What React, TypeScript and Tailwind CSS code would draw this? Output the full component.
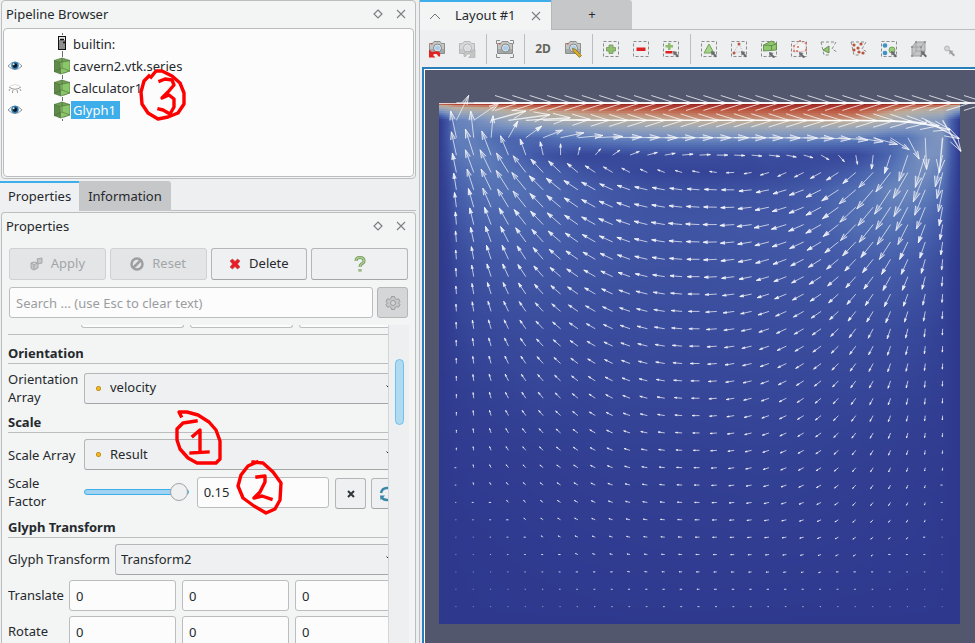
import React from "react";

/* ---------- velocity field ---------- */

type Sample = [number, number, number]; // column, dx, dy

// Sampled arrows of the cavity flow, three units to one screen pixel.
const FIELD: { row: number; samples: Sample[] }[] = [
  { row: 0, samples: [[0, 187, 0], [30, 187, 0]] },
  {
    row: 1,
    samples: [
      [0, 0, 0], [1, 37, -75], [2, 76, -52], [3, 104, -28], [4, 124, -17], [5, 133, -8], [6, 141, -3], [7, 146, 0],
      [9, 156, 0], [15, 166, 0], [23, 168, 1], [24, 167, 3], [25, 160, 8], [26, 146, 16], [27, 127, 28],
      [28, 102, 55], [29, 55, 93], [30, 0, 0],
    ],
  },
  {
    row: 2,
    samples: [
      [0, 0, 0], [1, -17, -80], [2, -9, -80], [3, 6, -66], [4, 28, -50], [5, 48, -35], [6, 58, -23], [7, 70, -15],
      [8, 75, -7], [9, 82, -4], [10, 87, -2], [12, 90, 0], [16, 95, 0], [20, 93, 1], [22, 88, 4], [23, 88, 7],
      [24, 82, 12], [25, 73, 20], [26, 56, 36], [27, 34, 64], [28, 4, 95], [29, -10, 105], [30, 0, 0],
    ],
  },
  {
    row: 3,
    samples: [
      [0, 0, 0], [1, -15, -70], [2, -25, -78], [3, -28, -72], [4, -24, -58], [5, -17, -48], [6, -9, -40], [7, 0, -34],
      [8, 6, -24], [9, 16, -19], [10, 22, -15], [11, 28, -11], [12, 30, -8], [14, 33, -3], [16, 33, 0], [18, 31, 3],
      [19, 33, 4], [20, 30, 6], [21, 28, 8], [22, 24, 14], [23, 18, 20], [24, 5, 28], [25, -5, 42], [26, -18, 55],
      [27, -27, 78], [28, -30, 97], [29, -22, 95], [30, 0, 0],
    ],
  },
  {
    row: 4,
    samples: [
      [0, 0, 0], [1, -12, -58], [2, -25, -68], [3, -33, -68], [4, -36, -58], [5, -38, -50], [6, -37, -40],
      [7, -36, -34], [8, -32, -27], [9, -30, -20], [10, -28, -17], [11, -25, -13], [12, -22, -10], [14, -21, -6],
      [16, -22, -3], [17, -24, 1], [18, -23, 4], [19, -26, 8], [20, -26, 12], [21, -28, 14], [22, -32, 18],
      [23, -36, 23], [24, -39, 33], [25, -43, 45], [26, -44, 58], [27, -44, 77], [28, -36, 88], [29, -17, 78],
      [30, 0, 0],
    ],
  },
  {
    row: 5,
    samples: [
      [0, 0, 0], [1, -8, -50], [2, -20, -62], [3, -30, -62], [4, -37, -58], [5, -42, -52], [6, -42, -42],
      [7, -43, -35], [8, -42, -28], [9, -41, -23], [10, -39, -18], [12, -38, -9], [15, -37, -3], [17, -38, 0],
      [18, -38, 4], [19, -39, 8], [20, -40, 12], [21, -43, 16], [22, -45, 22], [23, -50, 33], [24, -50, 42],
      [25, -49, 57], [26, -48, 73], [27, -42, 80], [28, -32, 76], [29, -13, 66], [30, 0, 0],
    ],
  },
  {
    row: 7,
    samples: [
      [0, 0, 0], [1, -3, -38], [2, -12, -50], [3, -20, -52], [4, -28, -50], [5, -35, -45], [6, -38, -40],
      [7, -40, -35], [8, -40, -28], [9, -41, -23], [10, -42, -18], [12, -40, -10], [14, -41, -4], [16, -42, 0],
      [18, -44, 6], [20, -45, 14], [22, -46, 26], [23, -46, 36], [24, -46, 48], [25, -42, 53], [26, -40, 60],
      [27, -30, 60], [28, -21, 55], [29, -8, 45], [30, 0, 0],
    ],
  },
  {
    row: 9,
    samples: [
      [0, 0, 0], [1, -2, -28], [2, -7, -38], [3, -14, -42], [4, -19, -42], [5, -26, -40], [6, -30, -35],
      [7, -34, -30], [8, -36, -25], [10, -38, -18], [12, -38, -9], [15, -38, 0], [16, -40, 2], [18, -40, 8],
      [20, -40, 15], [22, -38, 24], [24, -33, 35], [25, -32, 40], [26, -27, 45], [27, -20, 45], [28, -12, 42],
      [29, -3, 32], [30, 0, 0],
    ],
  },
  {
    row: 13,
    samples: [
      [0, 0, 0], [1, -1, -20], [2, -4, -26], [3, -8, -27], [4, -13, -27], [5, -18, -26], [6, -22, -23], [8, -26, -18],
      [10, -28, -13], [12, -31, -8], [15, -32, 0], [18, -31, 7], [20, -30, 14], [22, -27, 19], [24, -20, 27],
      [26, -10, 30], [27, -7, 28], [28, -3, 25], [29, -1, 19], [30, 0, 0],
    ],
  },
  {
    row: 17,
    samples: [
      [0, 0, 0], [1, 0, -12], [2, -2, -17], [3, -5, -18], [4, -9, -18], [6, -15, -18], [8, -17, -14], [10, -21, -11],
      [12, -23, -6], [15, -24, 0], [18, -24, 6], [20, -22, 11], [22, -18, 15], [24, -14, 19], [26, -7, 20],
      [28, -2, 18], [29, -1, 15], [30, 0, 0],
    ],
  },
  {
    row: 21,
    samples: [
      [0, 0, 0], [1, 0, -6], [2, -2, -9], [4, -7, -9], [6, -10, -8], [8, -13, -8], [10, -16, -6], [12, -17, -3],
      [15, -17, 0], [18, -18, 4], [20, -17, 7], [22, -15, 9], [24, -10, 12], [26, -6, 13], [28, -2, 10], [29, -1, 8],
      [30, 0, 0],
    ],
  },
  {
    row: 25,
    samples: [
      [0, 0, 0], [1, 0, -2], [4, -4, -4], [8, -9, -4], [15, -13, 0], [20, -13, 2], [24, -9, 6], [28, -3, 6],
      [29, 0, 3], [30, 0, 0],
    ],
  },
  { row: 29, samples: [[0, 0, 0], [1, -1, 0], [15, -6, 0], [28, -2, 1], [30, 0, 0]] },
  { row: 30, samples: [[0, 0, 0], [30, 0, 0]] },
];

const CELLS = 30;
const PLOT = { x: 14, y: 33, size: 521 };
const STEP = PLOT.size / CELLS;

function alongRow(samples: Sample[], col: number): [number, number] {
  for (let k = 1; k < samples.length; k++) {
    const [c0, x0, y0] = samples[k - 1];
    const [c1, x1, y1] = samples[k];
    if (col <= c1) {
      const t = (col - c0) / (c1 - c0);
      return [x0 + (x1 - x0) * t, y0 + (y1 - y0) * t];
    }
  }
  return [0, 0];
}

function velocity(col: number, row: number): [number, number] {
  for (let k = 1; k < FIELD.length; k++) {
    if (row <= FIELD[k].row) {
      const a = FIELD[k - 1];
      const b = FIELD[k];
      const t = (row - a.row) / (b.row - a.row);
      const u = alongRow(a.samples, col);
      const v = alongRow(b.samples, col);
      return [u[0] + (v[0] - u[0]) * t, u[1] + (v[1] - u[1]) * t];
    }
  }
  return [0, 0];
}

const COLOR_STOPS: [number, number[]][] = [
  [0, [46, 57, 142]],
  [15, [49, 62, 146]],
  [32, [58, 76, 157]],
  [50, [69, 93, 170]],
  [75, [90, 120, 184]],
  [100, [122, 146, 192]],
  [135, [158, 168, 182]],
  [158, [184, 174, 160]],
  [166, [194, 160, 138]],
  [173, [194, 120, 95]],
  [179, [188, 84, 62]],
  [187, [150, 28, 32]],
];

function colorOf(speed: number): string {
  for (let k = 1; k < COLOR_STOPS.length; k++) {
    const [s0, a] = COLOR_STOPS[k - 1];
    const [s1, b] = COLOR_STOPS[k];
    if (speed <= s1) {
      const t = (speed - s0) / (s1 - s0);
      return `rgb(${a.map((c, i) => Math.round(c + (b[i] - c) * t)).join(",")})`;
    }
  }
  return "rgb(150,28,32)";
}

const NODES = Array.from({ length: CELLS + 1 }, (_, j) =>
  Array.from({ length: CELLS + 1 }, (_, i) => {
    const [x, y] = velocity(i, j);
    return Math.hypot(x, y);
  }),
);

const BAND = 2;
const BANDS = Array.from({ length: Math.ceil(PLOT.size / BAND) }, (_, n) => {
  const top = n * BAND;
  const row = Math.min((top + BAND / 2) / STEP, CELLS);
  const j = Math.min(Math.floor(row), CELLS - 1);
  const t = row - j;
  const stops: string[] = [];
  for (let s = 0; s <= CELLS * 2; s++) {
    const i = Math.floor(s / 2);
    const i2 = Math.min(i + (s % 2), CELLS);
    const up = (NODES[j][i] + NODES[j][i2]) / 2;
    const down = (NODES[j + 1][i] + NODES[j + 1][i2]) / 2;
    stops.push(colorOf(up + (down - up) * t));
  }
  return { top, height: Math.min(BAND, PLOT.size - top), stops };
});

const ARROWS = Array.from({ length: CELLS }, (_, j) => j).flatMap((j) =>
  Array.from({ length: CELLS - 1 }, (_, i) => {
    const [vx, vy] = velocity(i + 1, j);
    const dx = vx / 3;
    const dy = vy / 3;
    const x = PLOT.x + (i + 1) * STEP;
    const y = PLOT.y + j * STEP;
    return { x, y, dx, dy, length: Math.hypot(dx, dy) };
  }),
);

function Arrow({ x, y, dx, dy, length }: (typeof ARROWS)[number]) {
  if (length < 2.5) {
    const w = Math.max(length, 1);
    return <rect x={x - w} y={y - 0.5} width={w} height={1} fill="#fff" opacity={0.35 + length * 0.2} />;
  }
  const tx = x + dx;
  const ty = y + dy;
  const back = length > 34 ? 0.38 : 0.33;
  const half = length > 34 ? 0.12 : 0.1;
  const ax = tx - dx * back - dy * half;
  const ay = ty - dy * back + dx * half;
  const bx = tx - dx * back + dy * half;
  const by = ty - dy * back - dx * half;
  const filled = length < 34;
  return (
    <g stroke="#fff">
      <path d={`M${x} ${y}L${tx} ${ty}`} strokeWidth={length > 34 ? 1.4 : 0.9} opacity={0.75} />
      <path
        d={`M${ax} ${ay}L${tx} ${ty}L${bx} ${by}`}
        strokeWidth={length > 12 ? 0.75 : 0.5}
        fill={filled ? "#fff" : "none"}
        fillOpacity={length > 20 ? 0.25 : 0.7}
      />
    </g>
  );
}

function FlowPlot() {
  return (
    <svg width="550" height="573" viewBox="0 0 550 573" className="block" role="img" aria-label="Cavity velocity">
      <defs>
        {BANDS.map((band, n) => (
          <linearGradient key={n} id={`band-${n}`} x1="0" x2="1" y1="0" y2="0">
            {band.stops.map((color, s) => (
              <stop key={s} offset={s / (CELLS * 2)} stopColor={color} />
            ))}
          </linearGradient>
        ))}
      </defs>
      {BANDS.map((band, n) => (
        <rect
          key={n}
          x={PLOT.x}
          y={PLOT.y + band.top}
          width={PLOT.size}
          height={band.height}
          fill={`url(#band-${n})`}
        />
      ))}
      <path d={`M${PLOT.x} ${PLOT.y + 0.5}h${PLOT.size}`} stroke="#fff" opacity="0.7" />
      {ARROWS.map((arrow, n) => (
        <Arrow key={n} {...arrow} />
      ))}
    </svg>
  );
}

/* ---------- icons ---------- */

function Eye() {
  return (
    <svg width="16" height="16" viewBox="0 0 16 16">
      <path d="M1 8Q8 0 15 8Q8 15 1 8Z" fill="#fff" stroke="#8b9196" />
      <circle cx="8" cy="7.6" r="3.8" fill="#2f7fb5" />
      <circle cx="8" cy="7.6" r="2.3" fill="#0a1a26" />
      <circle cx="6.6" cy="6.2" r="1" fill="#d8effc" />
    </svg>
  );
}

function ClosedEye() {
  return (
    <svg width="16" height="16" viewBox="0 0 16 16" fill="none" stroke="#9a9a9a">
      <path d="M2 7Q8 11.500 14 7M3 9l-1 2M6 10l-.6 3M10 10l.6 3M13 9l1 2" />
      <path d="M3 6Q8 3 13 6" stroke="#dcdcdc" />
    </svg>
  );
}

function Cube() {
  return (
    <svg width="16" height="18" viewBox="0 0 16 18">
      <path d="M0 3.500L8 1L16 3.500V14L10 16.500L0 14.500Z" fill="#6f9f55" />
      <path d="M6 5.500L16 3.500V14L6.500 17Z" fill="#8cc66b" />
      <path d="M0 3.500L6 5.500L6.500 17L0 14.500Z" fill="#5f8a4a" />
      <path
        d="M0 3.500L8 1L16 3.500V14L6.500 17L0 14.500ZM0 3.500L6 5.500L16 3.500M6 5.500L6.500 17M8 1V11L0 14.500M8 11L16 14"
        fill="none"
        stroke="#4c6f3b"
        strokeWidth="0.6"
      />
    </svg>
  );
}

function Server() {
  return (
    <svg width="16" height="16" viewBox="0 0 16 16">
      <rect x="4.500" y="1.500" width="7" height="13" fill="#8d8d8d" stroke="#111" />
      <rect x="5" y="2" width="6" height="3" fill="#e5e5e5" />
      <path d="M6 4.500h4M9 7.500h2" stroke="#111" strokeWidth="1.500" />
    </svg>
  );
}

function FloatIcon() {
  return (
    <svg width="10" height="10" viewBox="0 0 10 10" fill="none" stroke="#7c8084" strokeWidth="1.200">
      <path d="M5 1L9 5L5 9L1 5Z" />
    </svg>
  );
}

function CloseIcon() {
  return (
    <svg width="10" height="10" viewBox="0 0 10 10" fill="none" stroke="#7c8084" strokeWidth="1.100">
      <path d="M1 1L9 9M9 1L1 9" />
    </svg>
  );
}

function Camera({ muted = false, children }: { muted?: boolean; children?: React.ReactNode }) {
  return (
    <svg width="18" height="18" viewBox="0 0 18 18">
      <g opacity={muted ? 0.55 : 1}>
        <path d="M1.500 3.500h3l1.500-2h6l1.500 2h3v10h-15z" fill="#c4c6c4" stroke="#8b8e8b" />
        <path d="M2 9h14v4H2z" fill="#a6a9a9" />
        <circle cx="9.500" cy="8" r="4" fill="#e6e8e8" stroke="#7d8488" />
        <circle cx="9.500" cy="8" r="2.500" fill={muted ? "#c9cdd0" : "#a9cdea"} />
        <rect x="3" y="3" width="1.500" height="1.500" fill={muted ? "#999" : "#e04a3a"} />
      </g>
      {children}
    </svg>
  );
}

function Dashed({ children, frame = "M1.500 1.500h15v15h-15z" }: { children?: React.ReactNode; frame?: string }) {
  return (
    <svg width="18" height="18" viewBox="0 0 18 18">
      <path d={frame} fill="none" stroke="#8a8d88" strokeDasharray="3 2" />
      {children}
    </svg>
  );
}

function Cursor({ x = 11, y = 11 }: { x?: number; y?: number }) {
  return (
    <path
      d={`M${x} ${y}l4.500 1l-1.300 1.100l2.800 2.900l-1.400 1.400l-2.900-2.900l-1.100 1.200z`}
      fill="#6a6d6f"
    />
  );
}

function Dots({ points, color, r = 1.2 }: { points: [number, number][]; color: string; r?: number }) {
  return (
    <>
      {points.map(([x, y]) => (
        <circle key={`${x}-${y}`} cx={x} cy={y} r={r} fill={color} />
      ))}
    </>
  );
}

const plus = "M7 5h4v2.500h2.500v3.500H11v2.500H7V11H4.500V7.500H7z";

const TOOL_GROUPS: { label: string; icon: React.ReactNode }[][] = [
  [
    {
      label: "Undo camera",
      icon: (
        <Camera>
          <path d="M1 9.500v8h6.500l-2.500-2.500q3.500-3 5.500 1.500h1.500q1.500-7.500-8-4.500z" fill="#e02222" />
        </Camera>
      ),
    },
    {
      label: "Redo camera",
      icon: (
        <Camera muted>
          <path
            d="M17 9.500v8h-6.500l2.500-2.500q-3.500-3-5.500 1.500h-1.500q-1.500-7.500 8-4.500z"
            fill="#c4c6c6"
            stroke="#a9abab"
            strokeWidth="0.600"
          />
        </Camera>
      ),
    },
  ],
  [
    {
      label: "Capture view",
      icon: (
        <Camera>
          <path d="M.5 4V.5H4M14 .5h3.500V4M17.500 14v3.500H14M4 17.500H.5V14" fill="none" stroke="#8a8d8a" />
        </Camera>
      ),
    },
  ],
  [
    { label: "2D", icon: <span className="text-xs font-bold text-[#66655a]">2D</span> },
    {
      label: "Adjust camera",
      icon: (
        <Camera>
          <path d="M8.500 8.500l2.500.5l6.500 6.500l-2 2l-6.500-6.500z" fill="#d9a928" stroke="#80651c" strokeWidth="0.700" />
        </Camera>
      ),
    },
  ],
  [
    {
      label: "Add selection",
      icon: (
        <Dashed>
          <path d={plus} fill="#8fc06c" stroke="#75945e" strokeWidth="0.800" />
        </Dashed>
      ),
    },
    {
      label: "Subtract selection",
      icon: (
        <Dashed>
          <rect x="4.500" y="7.500" width="9" height="3.500" fill="#e02020" />
        </Dashed>
      ),
    },
    {
      label: "Toggle selection",
      icon: (
        <Dashed>
          <path d="M6 3h2.500v2H11v2.500H8.500V10H6V7.500H3.500V5H6z" fill="#8fbc6c" />
          <rect x="3.500" y="11" width="7" height="2.500" fill="#e02020" />
          <Cursor x={11} y={11} />
        </Dashed>
      ),
    },
  ],
  [
    {
      label: "Select cells on",
      icon: (
        <Dashed>
          <path d="M9 4l5 9H4z" fill="#a5d48a" stroke="#74a258" />
          <Cursor />
        </Dashed>
      ),
    },
    {
      label: "Select points on",
      icon: (
        <Dashed>
          <path d="M9 4L4 12h9z" fill="none" stroke="#bbb" strokeDasharray="1 1" />
          <Dots points={[[9, 4], [4, 13]]} color="#b85a44" r={1.5} />
          <Cursor />
        </Dashed>
      ),
    },
    {
      label: "Select cells through",
      icon: (
        <Dashed>
          <path d="M3.500 5l8-4l5 3v6l-13 1z" fill="#8fc66e" stroke="#56833f" strokeWidth="0.8" />
          <path d="M3.500 5l8 .5l5-1.500M11.500 5.500V10" fill="none" stroke="#56833f" strokeWidth="0.8" />
          <Cursor x={9} y={12} />
        </Dashed>
      ),
    },
    {
      label: "Select points through",
      icon: (
        <Dashed>
          <path d="M4 6l6-5l6 3v7l-12 1z" fill="#f2f3f3" stroke="#d59a90" strokeDasharray="1 1" />
          <Dots points={[[10, 1], [16, 3], [16, 10], [4, 6], [8, 7], [4, 11], [7, 11]]} color="#d96a5e" r={1} />
          <Cursor x={9} y={12} />
        </Dashed>
      ),
    },
    {
      label: "Select cells with polygon",
      icon: (
        <Dashed frame="M1 2h15l-4 7l5 3M1 2l3 13h5">
          <path d="M9 6v7L3 10z" fill="#8fc66e" stroke="#688f50" />
        </Dashed>
      ),
    },
    {
      label: "Select points with polygon",
      icon: (
        <Dashed frame="M1 2h15l-4 7l5 3M1 2l3 13h5">
          <Dots points={[[4, 5], [11, 4], [8, 8], [4, 10], [9, 12], [13, 13]]} color="#b8553f" r={1.6} />
        </Dashed>
      ),
    },
    {
      label: "Select block",
      icon: (
        <Dashed>
          <Dots points={[[5, 5.5], [5, 13]]} color="#3a93c9" r={2.3} />
          <circle cx="12" cy="10" r="3" fill="#9ccb7f" stroke="#74a258" />
          <Cursor />
        </Dashed>
      ),
    },
    {
      label: "Interactive select cells",
      icon: (
        <svg width="18" height="18" viewBox="0 0 18 18">
          <path d="M2 7l4-5h9v9l-4 5H2z" fill="#c3c5c7" stroke="#9b9d9f" />
          <path d="M2 7h9l4-5M11 7v9M6 2v9L2 16M6 11h9" fill="none" stroke="#9b9d9f" strokeWidth="0.8" />
          <Dots points={[[2, 7], [6, 2], [15, 2], [2, 16], [11, 16], [11, 7]]} color="#8d8f91" r={1.1} />
          <Cursor />
        </svg>
      ),
    },
    {
      label: "Interactive select points",
      icon: (
        <svg width="18" height="18" viewBox="0 0 18 18">
          <circle cx="7" cy="8.500" r="2.500" fill="#d3d5d6" stroke="#b3b5b7" />
          <g opacity="0.600">
            <Cursor x={9} y={10} />
          </g>
        </svg>
      ),
    },
  ],
];

/* ---------- panels ---------- */

function DockTitle({ children }: { children: string }) {
  return (
    <header className="flex items-center gap-[13px] pr-2 pl-[3px]">
      <h2 className="flex-1 leading-[18px]">{children}</h2>
      <button aria-label={`Float ${children}`}>
        <FloatIcon />
      </button>
      <button aria-label={`Close ${children}`}>
        <CloseIcon />
      </button>
    </header>
  );
}

const PIPELINE: { name: string; icon: React.ReactNode; eye?: React.ReactNode; selected?: boolean }[] = [
  { name: "builtin:", icon: <Server /> },
  { name: "cavern2.vtk.series", icon: <Cube />, eye: <Eye /> },
  { name: "Calculator1", icon: <Cube />, eye: <ClosedEye /> },
  { name: "Glyph1", icon: <Cube />, eye: <Eye />, selected: true },
];

function PipelineBrowser() {
  return (
    <section className="mr-[3px] ml-px flex h-[179px] flex-col gap-[5px] rounded border border-[#bcbdbf] bg-[#f3f4f4] px-px pt-1 pb-px">
      <DockTitle>Pipeline Browser</DockTitle>
      <ul className="flex-1 rounded border border-[#bcbdbf] bg-[#fcfcfc] pt-1">
        {PIPELINE.map((item) => (
          <li key={item.name} className="flex h-[22px] items-center pl-[3px]">
            <span className="w-4">{item.eye}</span>
            <span className="ml-[31px] flex h-[22px] w-4 flex-col items-center">
              <span className="h-0.5 w-px shrink-0 bg-[#6b6e70]" />
              {item.icon}
              <span className="w-px flex-1 bg-[#6b6e70]" />
            </span>
            <span
              className={
                item.selected ? "ml-px bg-[#3daee9] px-0.5 pr-1 leading-[18px] text-[#fcfcfc]" : "ml-px px-0.5 leading-[18px]"
              }
            >
              {item.name}
            </span>
          </li>
        ))}
      </ul>
    </section>
  );
}

const button = "flex flex-1 items-center justify-center gap-2 rounded-[3px] border";

function ActionButtons() {
  return (
    <div className="mx-px flex h-8 gap-1">
      <button disabled className={`${button} border-[#cfd1d3] bg-[#e3e5e6] text-[#a2a5a8]`}>
        <svg width="13" height="14" viewBox="0 0 13 14" fill="#c4c6c8" stroke="#a6a8aa">
          <path d="M1 6l3-1l4 1v5l-4 2l-3-1.500zM1 6l3 1.500l4-1.500M4 7.500V13M7 2l5-1v5l-4 1z" />
        </svg>
        Apply
      </button>
      <button disabled className={`${button} border-[#cfd1d3] bg-[#e3e5e6] text-[#a2a5a8]`}>
        <svg width="14" height="14" viewBox="0 0 14 14" fill="none" stroke="#9c9fa1" strokeWidth="2.500">
          <circle cx="7" cy="7" r="5.500" />
          <path d="M3 3L11 11" transform="rotate(90 7 7)" />
        </svg>
        Reset
      </button>
      <button className={`${button} border-[#b4b6b8] border-b-[#a3a5a7] bg-[#eff0f1]`}>
        <svg width="12" height="12" viewBox="0 0 12 12">
          <path
            d="M3.500 1L6 3.500L8.500 1L11 3L8.500 6L11 9L8.500 11L6 8.500L3.500 11L1 9L3.500 6L1 3Z"
            fill="#ec1c24"
            stroke="#a94a44"
            strokeWidth="0.600"
          />
        </svg>
        Delete
      </button>
      <button aria-label="Help" className={`${button} border-[#b4b6b8] border-b-[#a3a5a7] bg-[#eff0f1]`}>
        <svg width="12" height="16" viewBox="0 0 12 16" fill="none">
          <path d="M2 5Q2 1.500 6 1.500Q10 1.500 10 5Q10 7 7.500 8Q6 9 6 11M6 13V15.500" stroke="#769463" strokeWidth="3" />
          <path d="M2 5Q2 1.500 6 1.500Q10 1.500 10 5Q10 7 7.500 8Q6 9 6 11M6 13V15.500" stroke="#a8d08a" strokeWidth="1.500" />
        </svg>
      </button>
    </div>
  );
}

function Combo({ id, value, dot = false }: { id: string; value: string; dot?: boolean }) {
  return (
    <div className="relative min-w-0 flex-1">
      <select
        id={id}
        defaultValue={value}
        className={`h-[31px] w-full appearance-none rounded-[3px] border border-[#b4b6b8] border-b-[#a3a5a7] bg-[#eff0f1] ${dot ? "pl-[25px]" : "pl-[5px]"}`}
      >
        <option>{value}</option>
      </select>
      {dot && <span className="absolute top-[13px] left-3 size-[5px] rounded-[2px] border border-[#c0932e] bg-[#f7b916]" />}
      <svg className="absolute top-3 right-[7px]" width="9" height="6" viewBox="0 0 9 6" fill="none" stroke="#232629">
        <path d="M.5 .5L4.500 4.500L8.500 .5" />
      </svg>
    </div>
  );
}

function Heading({ children }: { children: string }) {
  return <h3 className="border-b border-[#bcbdbf] leading-5 font-bold">{children}</h3>;
}

const field = "h-[31px] min-w-0 rounded-[3px] border border-[#bcbdbf] bg-[#fcfcfc] px-1.5";

function VectorRow({ label }: { label: string }) {
  return (
    <div className="flex items-center gap-[6px]">
      <span className="w-[55px]">{label}</span>
      {["X", "Y", "Z"].map((axis) => (
        <input key={axis} aria-label={`${label} ${axis}`} defaultValue="0" className={`${field} flex-1`} />
      ))}
    </div>
  );
}

function PropertyList() {
  return (
    <div className="flex min-h-0 flex-1">
      <div className="flex-1 overflow-hidden">
        <div className="flex w-[394px] flex-col">
          <div className="flex h-[10px] gap-[6px] border-b border-[#bcbdbf] pl-[73px]">
            {["a", "b", "c"].map((key) => (
              <span key={key} className="h-[3px] flex-1 rounded-b-[3px] border border-t-0 border-[#bcbdbf] bg-[#fcfcfc]" />
            ))}
          </div>
          <div className="pt-2">
            <Heading>Orientation</Heading>
          </div>
          <div className="flex items-center pt-[6px]">
            <label htmlFor="orientation-array" className="w-[76px] leading-[18px]">
              Orientation Array
            </label>
            <Combo id="orientation-array" value="velocity" dot />
          </div>
          <div className="pt-[6px]">
            <Heading>Scale</Heading>
          </div>
          <div className="flex items-center pt-[6px]">
            <label htmlFor="scale-array" className="w-[76px] leading-[18px]">
              Scale Array
            </label>
            <Combo id="scale-array" value="Result" dot />
          </div>
          <div className="flex items-center pt-1">
            <label htmlFor="scale-factor" className="w-[60px] leading-[18px]">
              Scale Factor
            </label>
            <input
              type="range"
              aria-label="Scale factor slider"
              defaultValue="100"
              className="ml-4 h-5 w-[105px] appearance-none bg-transparent [&::-webkit-slider-runnable-track]:h-1.5 [&::-webkit-slider-runnable-track]:rounded-full [&::-webkit-slider-runnable-track]:border [&::-webkit-slider-runnable-track]:border-[#3daee9] [&::-webkit-slider-runnable-track]:bg-[#9fd3f1] [&::-webkit-slider-thumb]:-mt-[7px] [&::-webkit-slider-thumb]:size-[18px] [&::-webkit-slider-thumb]:appearance-none [&::-webkit-slider-thumb]:rounded-full [&::-webkit-slider-thumb]:border [&::-webkit-slider-thumb]:border-[#a0a2a4] [&::-webkit-slider-thumb]:bg-[#eff0f1]"
            />
            <input id="scale-factor" defaultValue="0.15" className={`${field} ml-2 w-[133px]`} />
            <div className="flex shrink-0 gap-[5px] pt-[3px] pl-[6px]">
              <button
                aria-label="Reset scale factor"
                className="flex size-[31px] items-center justify-center rounded-[3px] border border-[#b4b6b8] border-b-[#a3a5a7] bg-[#eff0f1]"
              >
                <svg width="8" height="8" viewBox="0 0 8 8" stroke="#31363b" strokeWidth="2">
                  <path d="M1 1L7 7M7 1L1 7" />
                </svg>
              </button>
              <button
                aria-label="Rescale"
                className="flex size-[31px] items-center justify-center rounded-[3px] border border-[#b4b6b8] border-b-[#a3a5a7] bg-[#eff0f1]"
              >
                <svg width="16" height="16" viewBox="0 0 16 16" fill="none" stroke="#3a87a8" strokeWidth="2.500">
                  <path d="M2 7Q3 2 8 2Q11 2 13 4M14 9Q13 14 8 14Q5 14 3 12" />
                  <path d="M1 9.500h5L1.500 14zM15 6.500h-5L14.500 2z" fill="#3a87a8" stroke="none" />
                </svg>
              </button>
            </div>
          </div>
          <div className="pt-[7px]">
            <Heading>Glyph Transform</Heading>
          </div>
          <div className="flex items-center pt-[6px]">
            <label htmlFor="glyph-transform" className="w-[107px] whitespace-nowrap">
              Glyph Transform
            </label>
            <Combo id="glyph-transform" value="Transform2" />
          </div>
          <div className="flex flex-col gap-[5px] pt-[5px]">
            <VectorRow label="Translate" />
            <VectorRow label="Rotate" />
          </div>
        </div>
      </div>
      <div className="w-[21px] border-l border-[#d3d5d7] bg-[#eeeff0] pt-[34px] pl-[6px]">
        <div className="h-[66px] w-[9px] rounded-full border border-[#6fc0ec] bg-[#b0daf0]" />
      </div>
    </div>
  );
}

function PropertiesPanel() {
  return (
    <section className="mt-px mr-[3px] ml-px flex min-h-0 flex-1 flex-col rounded-t border border-b-0 border-[#bcbdbf] bg-[#f3f4f4] px-px pt-1">
      <DockTitle>Properties</DockTitle>
      <div className="flex min-h-0 flex-1 flex-col gap-[7px] px-[5px] pt-[13px]">
        <ActionButtons />
        <div className="mx-px flex gap-1">
          <input
            aria-label="Search"
            placeholder="Search ... (use Esc to clear text)"
            className={`${field} flex-1 placeholder:text-[#9b9d9f]`}
          />
          <button
            aria-label="Advanced properties"
            className="flex h-[31px] w-[31px] items-center justify-center rounded-[3px] border border-[#b4b6b8] bg-[#d4d6d7]"
          >
            <svg width="16" height="16" viewBox="0 0 16 16" fill="none" stroke="#9a9c9e">
              <path
                d="M6.500 1.500h3l.5 2l1.500.9l2-.6l1.500 2.600L13.500 8l1.500 1.600l-1.500 2.600l-2-.6l-1.500.9l-.5 2h-3l-.5-2l-1.500-.9l-2 .6L1 9.600L2.500 8L1 6.400l1.500-2.600l2 .6L6 3.500z"
                fill="#c5c7c8"
              />
              <circle cx="8" cy="8" r="2.500" fill="#d4d6d7" />
            </svg>
          </button>
        </div>
        <PropertyList />
      </div>
    </section>
  );
}

function Sidebar() {
  return (
    <aside className="flex w-[419px] shrink-0 flex-col">
      <PipelineBrowser />
      <div className="mt-0.5 mr-[3px] flex h-[30px]">
        <button className="border-t-2 border-[#3daee9] bg-[#eff0f1] px-2">Properties</button>
        <button className="rounded-tr-[3px] bg-[#c6c7c9] px-[9px] pt-px">Information</button>
        <span className="flex-1 border-b border-[#bcbdbf]" />
      </div>
      <PropertiesPanel />
    </aside>
  );
}

function RenderPane() {
  return (
    <main className="flex min-w-0 flex-1 flex-col border-l border-[#bcbdbf]">
      <div className="flex h-[30px]">
        <div className="flex w-[131px] items-center border-t-2 border-[#3daee9] bg-[#f3f4f4] pl-[9px]">
          <svg width="12" height="7" viewBox="0 0 12 7" fill="none" stroke="#6e7276">
            <path d="M1 6L6 1L11 6" />
          </svg>
          <span className="ml-[14px] flex-1">Layout #1</span>
          <button aria-label="Close layout" className="mr-[10px]">
            <CloseIcon />
          </button>
        </div>
        <button aria-label="New layout" className="w-[81px] rounded-tr-[3px] border-b border-l border-[#b6b7b9] bg-[#c6c7c9]">
          +
        </button>
        <span className="flex-1 border-b border-[#bcbdbf]" />
      </div>
      <div className="flex h-[37px] overflow-hidden pt-px pl-[2px]">
        {TOOL_GROUPS.map((group, n) => (
          <React.Fragment key={n}>
            {n > 0 && <span className="my-[3px] mr-[3px] ml-1 w-0 shrink-0 border-l border-[#bcbdbf]" />}
            {group.map((tool) => (
              <button key={tool.label} aria-label={tool.label} className="flex w-[30px] shrink-0 items-center justify-center">
                {tool.icon}
              </button>
            ))}
          </React.Fragment>
        ))}
      </div>
      <div className="ml-[2px] min-h-0 flex-1 overflow-hidden border-t-2 border-l-2 border-[#2980b9] bg-[#52576e]">
        <div className="border-t border-l border-white">
          <FlowPlot />
        </div>
      </div>
    </main>
  );
}

function Annotations() {
  return (
    <svg
      className="pointer-events-none absolute top-0 left-0"
      width="300"
      height="530"
      viewBox="0 0 300 530"
      fill="none"
      stroke="#f00"
      strokeLinejoin="round"
      strokeLinecap="square"
      strokeWidth="3.400"
      aria-hidden="true"
    >
      <path d="M151 77L156 71L162 71L172 76L180 83L184 93L184 104L178 113L168 117L158 119L148 113L142 104L141 92L144 81L149 76" />
      <path d="M160 81L165 79L172 80L174 85L168 92L162 98L169 95L174 99L174 107L170 114L163 110L159 109" />
      <path d="M181 416L179 412L187 412L198 415L209 422L216 430L220 441L220 459L216 463L197 463L188 458L180 449L177 440L177 429L183 423L196 421" />
      <path d="M193 436L200 430L200 452M191 453L208 452" />
      <path d="M253 462L263 463L273 472L281 483L280 500L275 509L266 513L254 506L243 498L238 486L241 475L248 466L257 462" />
      <path d="M257 477L265 476L265 482L260 492L254 498L262 496L271 499" />
    </svg>
  );
}

export default function App() {
  return (
    <div className="relative flex h-screen overflow-hidden bg-[#eeeff1] font-['Noto_Sans',sans-serif] text-[13px] text-[#25292d]">
      <Sidebar />
      <RenderPane />
      <Annotations />
    </div>
  );
}
